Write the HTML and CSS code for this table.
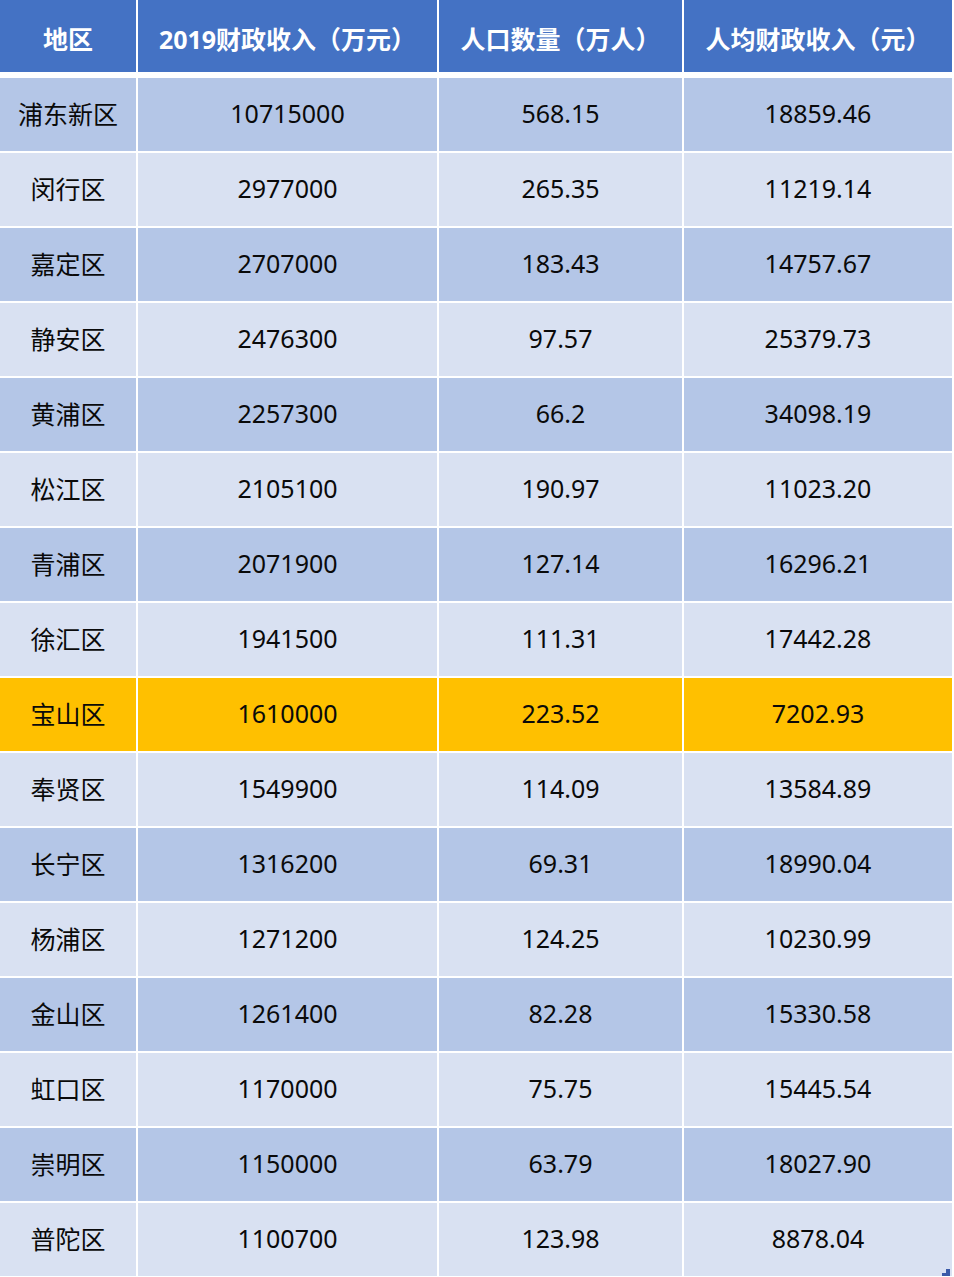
FILE: index.html
```html
<!DOCTYPE html>
<html lang="zh-CN">
<head>
<meta charset="utf-8">
<title>上海各区财政收入</title>
<link rel="stylesheet" href="styles.css">
</head>
<body>
<div class="table">
  <div class="row head">
    <div class="cell">地区</div>
    <div class="cell">2019财政收入（万元）</div>
    <div class="cell">人口数量（万人）</div>
    <div class="cell">人均财政收入（元）</div>
  </div>
  <div class="row dark"><div class="cell">浦东新区</div><div class="cell">10715000</div><div class="cell">568.15</div><div class="cell">18859.46</div></div>
  <div class="row light"><div class="cell">闵行区</div><div class="cell">2977000</div><div class="cell">265.35</div><div class="cell">11219.14</div></div>
  <div class="row dark"><div class="cell">嘉定区</div><div class="cell">2707000</div><div class="cell">183.43</div><div class="cell">14757.67</div></div>
  <div class="row light"><div class="cell">静安区</div><div class="cell">2476300</div><div class="cell">97.57</div><div class="cell">25379.73</div></div>
  <div class="row dark"><div class="cell">黄浦区</div><div class="cell">2257300</div><div class="cell">66.2</div><div class="cell">34098.19</div></div>
  <div class="row light"><div class="cell">松江区</div><div class="cell">2105100</div><div class="cell">190.97</div><div class="cell">11023.20</div></div>
  <div class="row dark"><div class="cell">青浦区</div><div class="cell">2071900</div><div class="cell">127.14</div><div class="cell">16296.21</div></div>
  <div class="row light"><div class="cell">徐汇区</div><div class="cell">1941500</div><div class="cell">111.31</div><div class="cell">17442.28</div></div>
  <div class="row gold"><div class="cell">宝山区</div><div class="cell">1610000</div><div class="cell">223.52</div><div class="cell">7202.93</div></div>
  <div class="row light"><div class="cell">奉贤区</div><div class="cell">1549900</div><div class="cell">114.09</div><div class="cell">13584.89</div></div>
  <div class="row dark"><div class="cell">长宁区</div><div class="cell">1316200</div><div class="cell">69.31</div><div class="cell">18990.04</div></div>
  <div class="row light"><div class="cell">杨浦区</div><div class="cell">1271200</div><div class="cell">124.25</div><div class="cell">10230.99</div></div>
  <div class="row dark"><div class="cell">金山区</div><div class="cell">1261400</div><div class="cell">82.28</div><div class="cell">15330.58</div></div>
  <div class="row light"><div class="cell">虹口区</div><div class="cell">1170000</div><div class="cell">75.75</div><div class="cell">15445.54</div></div>
  <div class="row dark"><div class="cell">崇明区</div><div class="cell">1150000</div><div class="cell">63.79</div><div class="cell">18027.90</div></div>
  <div class="row light"><div class="cell">普陀区</div><div class="cell">1100700</div><div class="cell">123.98</div><div class="cell">8878.04</div></div>
  <div class="handle"><span class="h1"></span><span class="h2"></span></div>
</div>
</body>
</html>
```

FILE: styles.css
```css
html, body {
  margin: 0;
  padding: 0;
  background: #ffffff;
}
body {
  font-family: "Noto Sans", "Noto Sans CJK SC", sans-serif;
  font-size: 25px;
  color: #0a0a0a;
}
.table {
  position: relative;
  width: 952px;
  display: flex;
  flex-direction: column;
  gap: 2px;
}
.row {
  display: grid;
  grid-template-columns: 136px 299px 243px 268px;
  column-gap: 2px;
  height: 73px;
}
.cell {
  display: flex;
  align-items: center;
  justify-content: center;
  white-space: nowrap;
  padding-bottom: 3px;
}
.head {
  height: 72px;
  margin-bottom: 4px;
}
.head .cell {
  background: #4472c4;
  color: #ffffff;
  font-weight: 700;
  padding-top: 4px;
  padding-bottom: 0;
}
.dark .cell { background: #b4c6e7; }
.light .cell { background: #d9e1f2; }
.gold .cell { background: #ffc000; }
.handle {
  position: absolute;
  right: 2px;
  bottom: -1px;
  width: 8px;
  height: 8px;
}
.handle .h1 {
  position: absolute;
  right: 0;
  bottom: 0;
  width: 8px;
  height: 4px;
  background: #3a5aa8;
}
.handle .h2 {
  position: absolute;
  right: 0;
  bottom: 0;
  width: 4px;
  height: 8px;
  background: #3a5aa8;
}
```
